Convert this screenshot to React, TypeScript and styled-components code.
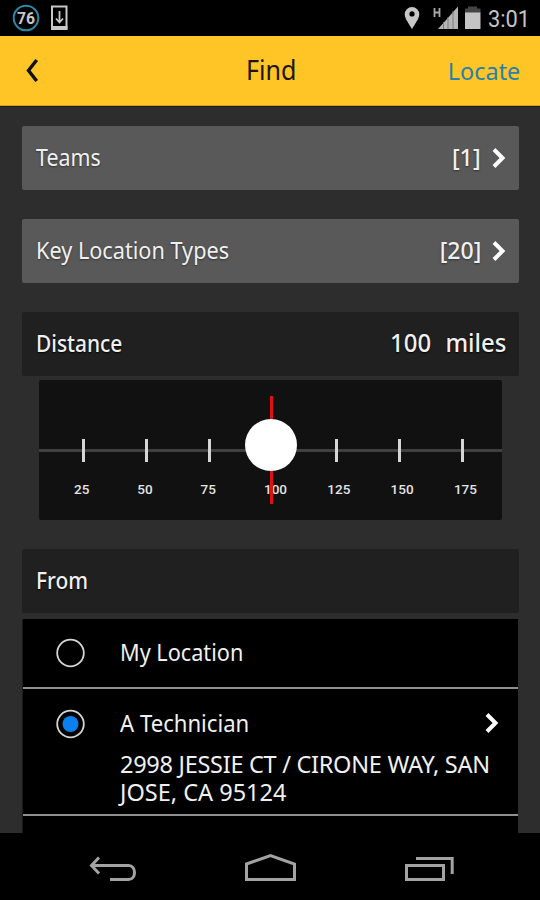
import React from "react";
import styled, { createGlobalStyle } from "styled-components";

const GlobalStyle = createGlobalStyle`
  * { box-sizing: border-box; }
  body { margin: 0; background: #000; }
`;

const Screen = styled.div`
  width: 540px;
  height: 900px;
  display: flex;
  flex-direction: column;
  overflow: hidden;
  background: #2d2d2d;
  color: #f0f0f0;
  font-family: "Noto Sans", "Open Sans", sans-serif;
`;

const StatusBar = styled.div`
  height: 36px;
  flex: none;
  display: flex;
  justify-content: space-between;
  background: #000;
`;

const Header = styled.header`
  height: 71px;
  flex: none;
  display: grid;
  grid-template-columns: 1fr 60px 1fr;
  align-items: center;
  padding: 0 20px 2px 24px;
  background: #ffc425;
  border-bottom: 1px solid #161616;
  box-shadow: inset 0 -1px #d8a31c;
  color: #1c170a;
`;

const Label = styled.span<{ $size?: number; $stretch?: number; $from?: string; $weight?: number; $color?: string }>`
  display: inline-block;
  font-size: ${(p) => p.$size ?? 24}px;
  font-weight: ${(p) => p.$weight ?? 400};
  line-height: 30px;
  white-space: pre;
  color: ${(p) => p.$color ?? "inherit"};
  transform: scaleX(${(p) => p.$stretch ?? 0.88});
  transform-origin: ${(p) => p.$from ?? "left"} center;
`;

const HeaderEnd = styled.div`
  display: flex;
  justify-content: flex-end;
  padding-top: 2px;
`;

const HeaderTitle = styled.div`
  display: flex;
  justify-content: center;
  padding-right: 2px;
`;

const Content = styled.main`
  flex: 1;
  min-height: 0;
  overflow: hidden;
  padding: 19px 21px 0 22px;
  display: flex;
  flex-direction: column;
`;

const Bar = styled.div<{ $dark?: boolean; $gap: number }>`
  height: 64px;
  flex: none;
  display: flex;
  align-items: center;
  justify-content: space-between;
  margin-bottom: ${(p) => p.$gap}px;
  padding: 0 13px 2px 14px;
  border-radius: 2px;
  background: ${(p) => (p.$dark ? "#202020" : "#595959")};
  text-shadow: ${(p) => (p.$dark ? "0 1px 2px #000" : "0 1px 2px #333")};
`;

const BarEnd = styled.div`
  display: flex;
  align-items: center;
  gap: 11px;
  svg {
    margin-top: 2px;
  }
`;

const Reading = styled.div`
  padding-bottom: 2px;
  word-spacing: 1px;
`;

const Slider = styled.div`
  position: relative;
  flex: none;
  height: 140px;
  margin: 0 17px 29px;
  padding: 59px 0 0 12.5px;
  border-radius: 2px;
  background: #111;
`;

const Rail = styled.div`
  position: absolute;
  left: 0;
  right: 0;
  top: 69px;
  height: 3px;
  background: #404040;
`;

const Scale = styled.div`
  position: relative;
  display: grid;
  grid-template-columns: repeat(7, 63.3px);
`;

const Stop = styled.div<{ $shift: number }>`
  display: flex;
  flex-direction: column;
  align-items: center;
  gap: 18px;
  &::before {
    content: "";
    width: 3px;
    height: 23px;
    background: #d6d6d6;
  }
  span {
    font: 500 13.5px/19px Roboto, sans-serif;
    color: #e4e4e4;
    transform: translateX(${(p) => p.$shift}px);
  }
`;

const Needle = styled.div`
  position: absolute;
  left: 231px;
  top: 16px;
  width: 3px;
  height: 108px;
  background: #e01010;
`;

const Knob = styled.div`
  position: absolute;
  left: 206px;
  top: 39px;
  width: 52px;
  height: 52px;
  border-radius: 50%;
  background: #fff;
`;

const Options = styled.div`
  flex: 1;
  margin-right: 1px;
  border-left: 1px solid #1a1a1a;
  background: #000;
`;

const Option = styled.div<{ $height: number; $top: number }>`
  height: ${(p) => p.$height}px;
  display: grid;
  grid-template-columns: 64px 1fr 14px;
  align-content: start;
  align-items: center;
  padding: ${(p) => p.$top}px 19px 0 33px;
  border-bottom: 2px solid #8f8f8f;
`;

const Address = styled.div`
  grid-column: 2 / 4;
  padding-top: 11px;
`;

const AddressText = styled(Label)`
  line-height: 28px;
  &::first-line {
    letter-spacing: -0.29px;
  }
`;

const NavBar = styled.nav`
  height: 67px;
  flex: none;
  background: #000;
`;

const Drawing = styled.svg`
  display: block;
  flex: none;
`;

const Chevron = ({ color = "#fff" }: { color?: string }) => (
  <Drawing width="14" height="22" viewBox="0 0 14 22">
    <path d="M2 2.5 10.5 11 2 19.5" fill="none" stroke={color} strokeWidth="4" />
  </Drawing>
);

const Radio = ({ checked = false }: { checked?: boolean }) => (
  <Drawing width="30" height="32" viewBox="0 0 30 32">
    <circle cx="14.5" cy="17" r="13.3" fill="none" stroke="#d5d5d5" strokeWidth="1.8" />
    {checked && <circle cx="14.5" cy="17" r="8" fill="#0a80ee" />}
  </Drawing>
);

const stops = [
  { value: 25, shift: -1.5 },
  { value: 50, shift: -1.5 },
  { value: 75, shift: -1.5 },
  { value: 100, shift: 2.5 },
  { value: 125, shift: 2.5 },
  { value: 150, shift: 2.5 },
  { value: 175, shift: 2.5 },
];

export default function App() {
  return (
    <Screen>
      <GlobalStyle />
      <StatusBar>
        <Drawing width="90" height="36">
          <circle cx="26" cy="18" r="12.3" fill="none" stroke="#2b87a5" strokeWidth="2" />
          <text x="26" y="24" textAnchor="middle" textLength="18" lengthAdjust="spacingAndGlyphs" fontFamily="Roboto" fontWeight="700" fontSize="17" fill="#c8c8c8">76</text>
          <path d="M52 6.5h14.5v22H52z" fill="none" stroke="#c8c8c8" strokeWidth="2" />
          <path d="M51 26h16.5v4H51z" fill="#c8c8c8" />
          <path d="M59.5 11v10M56 18.5l3.5 4 3.5-4" fill="none" stroke="#c8c8c8" strokeWidth="1.8" />
        </Drawing>
        <Drawing width="140" height="36" viewBox="400 0 140 36">
          <path fillRule="evenodd" d="M412 7a7.3 7.3 0 0 1 7.3 7.3c0 4.5-4.8 10-7.3 15-2.5-5-7.3-10.5-7.3-15A7.3 7.3 0 0 1 412 7zm0 4.3a2.6 2.6 0 1 0 0 5.2 2.6 2.6 0 0 0 0-5.2z" fill="#c8c8c8" />
          <path d="M434.5 8v9M439.5 8v9M434.5 12.5h5" stroke="#a8a8a8" strokeWidth="1.8" fill="none" />
          <path d="M458 6.5V29h-20z" fill="#b5b5b5" />
          <path d="M443.5 22v7M448 17v12M453 11v18" stroke="#7c7c7c" strokeWidth="1" />
          <path d="M465 8.5h3V6.5h9v2h3.5V13H465z" fill="#444" />
          <path d="M465 12.5h15.5V29H465z" fill="#c4c4c4" />
          <text x="488" y="26.5" textLength="42" lengthAdjust="spacingAndGlyphs" fontFamily="Roboto" fontSize="23" fill="#c4c4c4">3:01</text>
        </Drawing>
      </StatusBar>
      <Header>
        <Drawing width="16" height="24" viewBox="0 0 16 24">
          <path d="M12.7 2 4.5 12.5 12.7 23" fill="none" stroke="#111" strokeWidth="3.4" />
        </Drawing>
        <HeaderTitle><Label $size={27} $stretch={0.93} $from="center">Find</Label></HeaderTitle>
        <HeaderEnd><Label $size={24} $stretch={0.975} $from="right" $color="#297fae">Locate</Label></HeaderEnd>
      </Header>
      <Content>
        <Bar $gap={29}>
          <Label $stretch={0.89}>Teams</Label>
          <BarEnd><Label $from="right" $weight={500} $stretch={0.97}>[1]</Label><Chevron /></BarEnd>
        </Bar>
        <Bar $gap={29}>
          <Label $stretch={0.903}>Key Location Types</Label>
          <BarEnd><Label $from="right" $weight={500} $stretch={0.96}>[20]</Label><Chevron /></BarEnd>
        </Bar>
        <Bar $dark $gap={4}>
          <Label $weight={500} $stretch={0.87}>Distance</Label>
          <Reading><Label $from="right" $size={26} $weight={500} $stretch={0.92}>100  miles</Label></Reading>
        </Bar>
        <Slider>
          <Rail />
          <Scale>
            {stops.map((s) => <Stop key={s.value} $shift={s.shift}><span>{s.value}</span></Stop>)}
          </Scale>
          <Needle />
          <Knob />
        </Slider>
        <Bar $dark $gap={6}>
          <Label $weight={500} $stretch={0.87}>From</Label>
        </Bar>
        <Options>
          <Option $height={70} $top={17}>
            <Radio />
            <Label $stretch={0.903}>My Location</Label>
          </Option>
          <Option $height={127} $top={18}>
            <Radio checked />
            <Label $stretch={0.922}>A Technician</Label>
            <Chevron />
            <Address>
              <AddressText $stretch={0.98}>{"2998 JESSIE CT / CIRONE WAY, SAN\nJOSE, CA 95124"}</AddressText>
            </Address>
          </Option>
        </Options>
      </Content>
      <NavBar>
        <Drawing width="540" height="67" viewBox="0 833 540 67" fill="none" stroke="#a3a3a3" strokeWidth="3">
          <path d="M99 857.5 91.5 865.5 99 873.5M92 865.5h36.5c8 0 8 14 0 14H110" />
          <path d="M246.5 864 270.5 855.5 294.5 864v15.5h-48z" />
          <path d="M406.5 865.5h37v14h-37zM416 858.5h36.2V874" />
        </Drawing>
      </NavBar>
    </Screen>
  );
}
